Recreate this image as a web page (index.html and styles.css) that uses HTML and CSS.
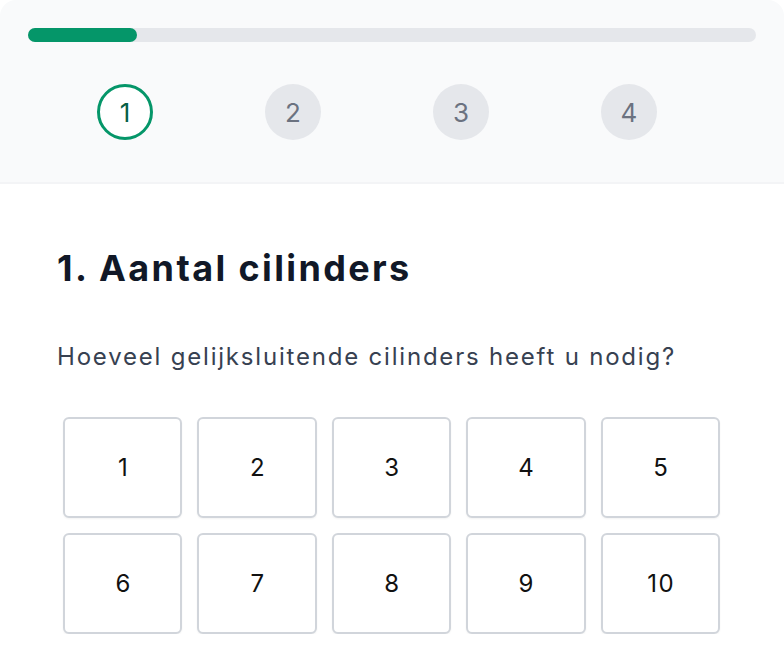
FILE: index.html
```html
<!DOCTYPE html>
<html lang="nl">
<head>
    <meta charset="UTF-8">
    <meta name="viewport" content="width=device-width, initial-scale=1.0">
    <title>Aantal cilinders</title>
    <link rel="stylesheet" href="styles.css">
</head>
<body>

<div class="wizard">
    <div class="wizard-header">
        <div class="progress">
            <div class="progress-fill"></div>
        </div>

        <div class="steps">
            <div class="step"><span class="step-circle active">1</span></div>
            <div class="step"><span class="step-circle">2</span></div>
            <div class="step"><span class="step-circle">3</span></div>
            <div class="step"><span class="step-circle">4</span></div>
        </div>
    </div>

    <div class="wizard-body">
        <h2>1. Aantal cilinders</h2>
        <p class="question">Hoeveel gelijksluitende cilinders heeft u nodig?</p>

        <!-- keuze aantal -->
        <div class="options">
            <button class="option">1</button>
            <button class="option">2</button>
            <button class="option">3</button>
            <button class="option">4</button>
            <button class="option">5</button>
            <button class="option">6</button>
            <button class="option">7</button>
            <button class="option">8</button>
            <button class="option">9</button>
            <button class="option">10</button>
        </div>
    </div>
</div>

</body>
</html>
```

FILE: styles.css
```css
body {
    margin: 0;
    background-color: #fff;
    font-family: 'Inter', 'Liberation Sans', sans-serif;
}

.wizard {
    width: 784px;
    border-radius: 16px 16px 0 0;
    overflow: hidden;
    background-color: #fff;
}

.wizard-header {
    background-color: #f9fafb;
    padding: 28px 28px 42px;
    border-bottom: 2px solid #f3f4f6;
}

.progress {
    height: 14px;
    background-color: #e5e7eb;
    border-radius: 7px;
}

.progress-fill {
    width: 109px;
    height: 100%;
    background-color: #059669;
    border-radius: 7px;
}

.steps {
    display: grid;
    grid-template-columns: repeat(4, 168px);
    padding-left: 13px;
    margin-top: 42px;
}

.step {
    display: flex;
    justify-content: center;
}

.step-circle {
    width: 56px;
    height: 56px;
    box-sizing: border-box;
    border-radius: 50%;
    display: flex;
    align-items: center;
    justify-content: center;
    background-color: #e5e7eb;
    color: #6b7280;
    font-size: 26px;
}

.step-circle.active {
    background-color: #fff;
    border: 3px solid #059669;
    color: #065f46;
}

.wizard-body {
    padding: 62px 57px 0;
}

h2 {
    margin: 0;
    font-size: 36px;
    line-height: 44px;
    font-weight: 700;
    letter-spacing: 0.066em;
    color: #111827;
}

.question {
    margin: 51px 0 0;
    font-size: 24px;
    line-height: 32px;
    letter-spacing: 0.075em;
    color: #374151;
}

.options {
    width: 657px;
    margin: 44px 0 0 6px;
    display: grid;
    grid-template-columns: repeat(5, 1fr);
    gap: 15px;
}

.option {
    height: 101px;
    padding: 0 0 0 2px;
    background-color: #fff;
    border: 2px solid #d1d5db;
    border-radius: 6px;
    box-shadow: 0 1px 2px rgba(0, 0, 0, 0.05);
    font-family: inherit;
    font-size: 24px;
    letter-spacing: 0.07em;
    color: #111;
    cursor: pointer;
}
```
